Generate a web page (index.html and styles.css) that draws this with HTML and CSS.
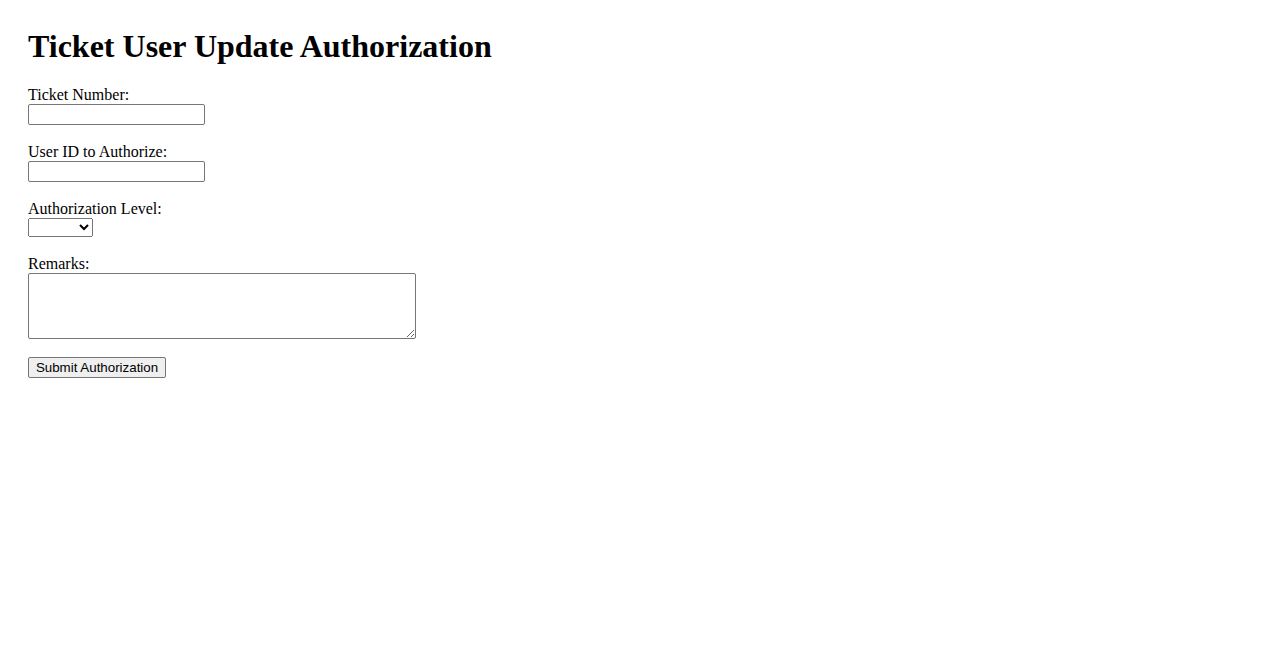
FILE: index.html
```html
<!DOCTYPE html>
<html lang="en">
<head>
<meta charset="utf-8">
<title>Ticket User Update Authorization</title>
<link rel="stylesheet" href="styles.css">
</head>
<body>
<h1 class="title">Ticket User Update Authorization</h1>
<form class="auth-form">
  <div class="field">
    <label class="field-label" for="ticket">Ticket Number:</label>
    <input class="text-input" type="text" id="ticket" name="ticket">
  </div>
  <div class="field">
    <label class="field-label" for="userid">User ID to Authorize:</label>
    <input class="text-input" type="text" id="userid" name="userid">
  </div>
  <div class="field">
    <label class="field-label" for="level">Authorization Level:</label>
    <select class="select-input" id="level" name="level">
      <option value=""></option>
    </select>
  </div>
  <div class="field">
    <label class="field-label" for="remarks">Remarks:</label>
    <textarea class="textarea-input" id="remarks" name="remarks"></textarea>
  </div>
  <button class="submit-btn" type="submit">Submit Authorization</button>
</form>
</body>
</html>
```

FILE: styles.css
```css
body {
  margin: 0;
  padding: 28px 28px;
  font-family: "Liberation Serif", "Times New Roman", serif;
  font-size: 16px;
  color: #000;
  background: #fff;
}

.title {
  font-size: 32px;
  font-weight: bold;
  margin: 0 0 21.44px;
}

.auth-form {
  margin: 0;
}

.field {
  margin-bottom: 18px;
}

.field-label {
  display: block;
}

.text-input {
  display: block;
  box-sizing: border-box;
  width: 177px;
  height: 21px;
  margin: 0;
  border: 1px solid #767676;
  border-radius: 2px;
  padding: 1px 2px;
  font-family: "Liberation Sans", Arial, sans-serif;
  font-size: 13.33px;
}

.select-input {
  display: block;
  box-sizing: border-box;
  width: 65px;
  height: 19px;
  margin: 0;
  font-family: "Liberation Sans", Arial, sans-serif;
  font-size: 13.33px;
}

.textarea-input {
  display: block;
  box-sizing: border-box;
  width: 388px;
  height: 66px;
  margin: 0;
  border: 1px solid #767676;
  border-radius: 2px;
  padding: 2px;
  font-family: "Liberation Mono", monospace;
  font-size: 13.33px;
}

.submit-btn {
  display: block;
  box-sizing: border-box;
  width: 138px;
  height: 21px;
  margin: 18px 0 0;
  padding: 1px 6px;
  border: 1px solid #767676;
  border-radius: 2px;
  background: #efefef;
  color: #000;
  font-family: "Liberation Sans", Arial, sans-serif;
  font-size: 13.33px;
}
```
